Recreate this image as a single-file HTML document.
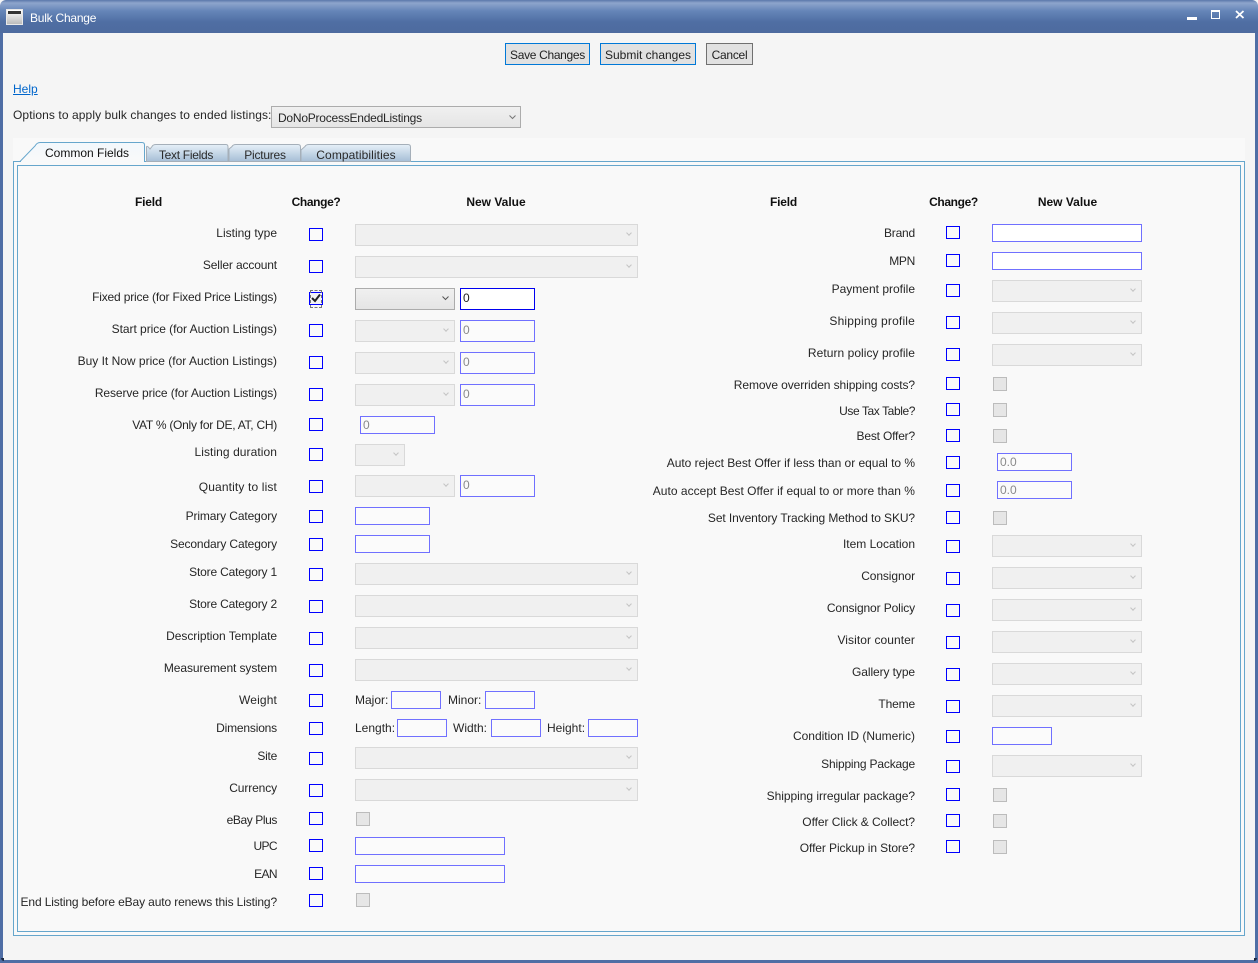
<!DOCTYPE html>
<html><head><meta charset="utf-8"><title>Bulk Change</title>
<style>
html,body{margin:0;padding:0}
body{position:relative;width:1258px;height:963px;overflow:hidden;background:#f5f5f5;font:12px/16px "Liberation Sans",sans-serif;color:#262626}
#p div,#p a,#p svg{position:absolute;box-sizing:border-box}
.t{white-space:nowrap;height:16px}
.l{right:981px;white-space:nowrap;height:16px}
.r{right:343px;white-space:nowrap;height:16px}
.h{font-weight:bold;color:#111;text-align:center;width:120px;height:16px}
.c{width:14px;height:13px;border:1px solid #0000ff;background:#fafafa}
.c1{left:309px}.c2{left:946px}
.b{width:14px;height:14px;border:1px solid #bcbcbc;background:#e6e6e6}
.s{height:22px;border:1px solid #d9d9d9;background:#f0f0f0}
.s::after{content:"";position:absolute;right:6px;top:6px;width:3px;height:3px;border-right:1px solid #c4c4c4;border-bottom:1px solid #c4c4c4;transform:rotate(45deg)}
.i{height:18px;border:1px solid #7070ff;background:#fbfbfb;color:#8a8a8a;padding-left:2px;line-height:17px}
.n{height:22px;line-height:19px}
.w{background:#fff}
.btn{top:43px;height:22px;background:#e1e1e1;border:1px solid #0078d7;text-align:center;line-height:22px;color:#222}
.tab{text-align:center;height:16px;color:#2a2a2a}
</style></head>
<body><div id="p">
<!-- window frame -->
<div style="left:0;top:0;width:1258px;height:33px;background:linear-gradient(#5a78ab 0,#8ea5cc 3px,#6585b8 11px,#4f6ea3 22px,#4e6b9f 33px);border-radius:6px 6px 0 0"></div>
<div style="left:0;top:33px;width:3px;height:930px;background:#4f6ea5"></div>
<div style="left:1255px;top:33px;width:3px;height:930px;background:#4f6ea5"></div>
<div style="left:0;top:960px;width:1258px;height:3px;background:#4f6ea5"></div>
<div style="left:1px;top:958px;width:3px;height:3px;background:#1c2a44;border-radius:0 0 0 3px"></div>
<div style="left:1254px;top:958px;width:3px;height:3px;background:#1c2a44;border-radius:0 0 3px 0"></div>
<!-- title icon -->
<div style="left:6px;top:9px;width:17px;height:16px;background:linear-gradient(#fff,#bbb);border:1px solid #e8e8e8"></div>
<div style="left:8px;top:11px;width:13px;height:3px;background:#333"></div>
<div class="t" style="left:30px;top:10px;color:#fff;letter-spacing:-.23px">Bulk Change</div>
<!-- window buttons -->
<div style="left:1187px;top:17px;width:10px;height:3px;background:#fff"></div>
<div style="left:1211px;top:10px;width:9px;height:9px;border:1px solid #fff;border-top:2px solid #fff"></div>
<svg style="left:1235px;top:10px" width="10" height="9" viewBox="0 0 10 9"><path d="M1 1L8.500 8M8.500 1L1 8" stroke="#fff" stroke-width="1.800" fill="none"/></svg>
<!-- buttons -->
<div class="btn" style="left:505px;width:85px;letter-spacing:-.32px">Save Changes</div>
<div class="btn" style="left:600px;width:96px">Submit changes</div>
<div class="btn" style="left:706px;width:47px;border-color:#707070;letter-spacing:-.28px">Cancel</div>
<a class="t" style="left:13px;top:81px;color:#0066cc;text-decoration:underline">Help</a>
<div class="t" style="left:13px;top:107px;letter-spacing:.09px">Options to apply bulk changes to ended listings:</div>
<div style="left:271px;top:106px;width:250px;height:22px;border:1px solid #acacac;background:linear-gradient(#f0f0f0,#e5e5e5);padding:3px 0 0 6px;letter-spacing:-.23px"><span>DoNoProcessEndedListings</span></div>
<svg style="left:508px;top:114px" width="9" height="6" viewBox="0 0 9 6"><path d="M1.500 1.500L4.500 4.500L7.500 1.500" stroke="#777" stroke-width="1" fill="none"/></svg>
<!-- tab panel -->
<div style="left:13px;top:138px;width:1232px;height:24px;background:#f9f9f9"></div>
<div style="left:13px;top:161px;width:1232px;height:775px;border:1px solid #66a6cc;background:#f9f9f9"></div>
<div style="left:17px;top:165px;width:1224px;height:767px;border:1px solid #66a6cc;background:#f9f9f9"></div>
<svg style="left:13px;top:138px" width="420" height="26" viewBox="13 138 420 26">
<defs><linearGradient id="g" x1="0" y1="0" x2="0" y2="1"><stop offset="0" stop-color="#e6f0f8"/><stop offset="1" stop-color="#a6bed6"/></linearGradient>
<linearGradient id="a" x1="0" y1="0" x2="0" y2="1"><stop offset="0" stop-color="#f2f8fc"/><stop offset="1" stop-color="#f9f9f9"/></linearGradient></defs>
<path d="M146.500 161.500V147Q147 145 150 149L152 146.500Q153 144.500 156 144.500H226Q228 144.500 228 147V161.500Z" fill="url(#g)" stroke="#a5afb9"/>
<path d="M229 161.500V149L232 146.500Q233 144.500 236 144.500H298Q300.500 144.500 300.500 147V161.500Z" fill="url(#g)" stroke="#a5afb9"/>
<path d="M301 161.500V150L305 146.500Q306 144.500 309 144.500H408Q410.500 144.500 410.500 147V161.500Z" fill="url(#g)" stroke="#a5afb9"/>
<path d="M20 161.500L35 146Q37 142.500 40 142.500H142Q144.500 142.500 144.500 145V161.500Z" fill="url(#a)" stroke="#66a6cc"/>
<path d="M21 161.500H144" stroke="#f6f9fb" stroke-width="1"/>
</svg>
<div class="tab" style="left:37px;top:145px;width:100px;color:#111">Common Fields</div>
<div class="tab" style="left:146px;top:147px;width:80px;letter-spacing:-.28px">Text Fields</div>
<div class="tab" style="left:230px;top:147px;width:70px;letter-spacing:-.23px">Pictures</div>
<div class="tab" style="left:306px;top:147px;width:100px;letter-spacing:.09px">Compatibilities</div>
<!-- headers -->
<div class="h" style="left:88.500px;top:194px;letter-spacing:-.18px">Field</div>
<div class="h" style="left:256px;top:194px;letter-spacing:-.37px">Change?</div>
<div class="h" style="left:436px;top:194px">New Value</div>
<div class="h" style="left:723.500px;top:194px;letter-spacing:-.18px">Field</div>
<div class="h" style="left:893.500px;top:194px;letter-spacing:-.37px">Change?</div>
<div class="h" style="left:1007.500px;top:194px">New Value</div>
<!-- left labels -->
<div class="l" style="top:225px">Listing type</div>
<div class="l" style="top:257px;letter-spacing:-.14px">Seller account</div>
<div class="l" style="top:289px;letter-spacing:-.17px">Fixed price (for Fixed Price Listings)</div>
<div class="l" style="top:321px;letter-spacing:-.04px">Start price (for Auction Listings)</div>
<div class="l" style="top:353px">Buy It Now price (for Auction Listings)</div>
<div class="l" style="top:385px;letter-spacing:-.11px">Reserve price (for Auction Listings)</div>
<div class="l" style="top:417px;letter-spacing:-.26px">VAT % (Only for DE, AT, CH)</div>
<div class="l" style="top:444px;letter-spacing:.07px">Listing duration</div>
<div class="l" style="top:479px;letter-spacing:.14px">Quantity to list</div>
<div class="l" style="top:508px;letter-spacing:-.12px">Primary Category</div>
<div class="l" style="top:536px;letter-spacing:-.14px">Secondary Category</div>
<div class="l" style="top:564px;letter-spacing:-.18px">Store Category 1</div>
<div class="l" style="top:596px;letter-spacing:-.18px">Store Category 2</div>
<div class="l" style="top:628px;letter-spacing:-.05px">Description Template</div>
<div class="l" style="top:660px;letter-spacing:-.09px">Measurement system</div>
<div class="l" style="top:692px;letter-spacing:.14px">Weight</div>
<div class="l" style="top:720px;letter-spacing:-.18px">Dimensions</div>
<div class="l" style="top:748px;letter-spacing:-.25px">Site</div>
<div class="l" style="top:780px;letter-spacing:-.12px">Currency</div>
<div class="l" style="top:812px;letter-spacing:-.41px">eBay Plus</div>
<div class="l" style="top:838px;letter-spacing:-.6px">UPC</div>
<div class="l" style="top:866px;letter-spacing:-.6px">EAN</div>
<div class="l" style="top:894px;letter-spacing:-.13px">End Listing before eBay auto renews this Listing?</div>
<!-- left checkboxes -->
<div class="c c1" style="top:228px"></div>
<div class="c c1" style="top:260px"></div>
<div class="c c1" style="top:292px;background:#f4f4f4"></div>
<div style="left:310px;top:290px;width:12px;height:18px;border:1px dashed #777"></div>
<svg style="left:309px;top:291px" width="14" height="14" viewBox="0 0 14 14"><path d="M3 7L6 10L11 3.500" stroke="#222" stroke-width="2" fill="none"/></svg>
<div class="c c1" style="top:324px"></div>
<div class="c c1" style="top:356px"></div>
<div class="c c1" style="top:388px"></div>
<div class="c c1" style="top:418px"></div>
<div class="c c1" style="top:448px"></div>
<div class="c c1" style="top:480px"></div>
<div class="c c1" style="top:510px"></div>
<div class="c c1" style="top:538px"></div>
<div class="c c1" style="top:568px"></div>
<div class="c c1" style="top:600px"></div>
<div class="c c1" style="top:632px"></div>
<div class="c c1" style="top:664px"></div>
<div class="c c1" style="top:694px"></div>
<div class="c c1" style="top:722px"></div>
<div class="c c1" style="top:752px"></div>
<div class="c c1" style="top:784px"></div>
<div class="c c1" style="top:812px"></div>
<div class="c c1" style="top:839px"></div>
<div class="c c1" style="top:867px"></div>
<div class="c c1" style="top:894px"></div>
<!-- left controls -->
<div class="s" style="left:355px;top:224px;width:283px"></div>
<div class="s" style="left:355px;top:256px;width:283px"></div>
<div style="left:355px;top:288px;width:100px;height:22px;border:1px solid #acacac;background:linear-gradient(#f0f0f0,#e5e5e5)"></div>
<svg style="left:441px;top:295px" width="9" height="6" viewBox="0 0 9 6"><path d="M1.500 1.500L4.500 4.500L7.500 1.500" stroke="#555" stroke-width="1" fill="none"/></svg>
<div class="i n w" style="left:460px;top:288px;width:75px;border-color:#0000f0;color:#222">0</div>
<div class="s" style="left:355px;top:320px;width:100px"></div>
<div class="i n" style="left:460px;top:320px;width:75px">0</div>
<div class="s" style="left:355px;top:352px;width:100px"></div>
<div class="i n" style="left:460px;top:352px;width:75px">0</div>
<div class="s" style="left:355px;top:384px;width:100px"></div>
<div class="i n" style="left:460px;top:384px;width:75px">0</div>
<div class="i" style="left:360px;top:416px;width:75px">0</div>
<div class="s" style="left:355px;top:444px;width:50px"></div>
<div class="s" style="left:355px;top:475px;width:100px"></div>
<div class="i n" style="left:460px;top:475px;width:75px">0</div>
<div class="i" style="left:355px;top:507px;width:75px"></div>
<div class="i" style="left:355px;top:535px;width:75px"></div>
<div class="s" style="left:355px;top:563px;width:283px"></div>
<div class="s" style="left:355px;top:595px;width:283px"></div>
<div class="s" style="left:355px;top:627px;width:283px"></div>
<div class="s" style="left:355px;top:659px;width:283px"></div>
<div class="t" style="left:355px;top:692px">Major:</div>
<div class="i" style="left:391px;top:691px;width:50px"></div>
<div class="t" style="left:448px;top:692px">Minor:</div>
<div class="i" style="left:485px;top:691px;width:50px"></div>
<div class="t" style="left:355px;top:720px">Length:</div>
<div class="i" style="left:397px;top:719px;width:50px"></div>
<div class="t" style="left:453px;top:720px">Width:</div>
<div class="i" style="left:491px;top:719px;width:50px"></div>
<div class="t" style="left:547px;top:720px">Height:</div>
<div class="i" style="left:588px;top:719px;width:50px"></div>
<div class="s" style="left:355px;top:747px;width:283px"></div>
<div class="s" style="left:355px;top:779px;width:283px"></div>
<div class="b" style="left:356px;top:812px"></div>
<div class="i" style="left:355px;top:837px;width:150px"></div>
<div class="i" style="left:355px;top:865px;width:150px"></div>
<div class="b" style="left:356px;top:893px"></div>
<!-- right labels -->
<div class="r" style="top:225px;letter-spacing:-.2px">Brand</div>
<div class="r" style="top:253px;letter-spacing:-.3px">MPN</div>
<div class="r" style="top:281px">Payment profile</div>
<div class="r" style="top:313px;letter-spacing:.18px">Shipping profile</div>
<div class="r" style="top:345px;letter-spacing:.05px">Return policy profile</div>
<div class="r" style="top:377px;letter-spacing:-.09px">Remove overriden shipping costs?</div>
<div class="r" style="top:403px;letter-spacing:-.41px">Use Tax Table?</div>
<div class="r" style="top:428px;letter-spacing:-.18px">Best Offer?</div>
<div class="r" style="top:455px;letter-spacing:-.02px">Auto reject Best Offer if less than or equal to %</div>
<div class="r" style="top:483px;letter-spacing:.02px">Auto accept Best Offer if equal to or more than %</div>
<div class="r" style="top:510px;letter-spacing:-.1px">Set Inventory Tracking Method to SKU?</div>
<div class="r" style="top:536px">Item Location</div>
<div class="r" style="top:568px;letter-spacing:-.1px">Consignor</div>
<div class="r" style="top:600px;letter-spacing:-.12px">Consignor Policy</div>
<div class="r" style="top:632px;letter-spacing:.07px">Visitor counter</div>
<div class="r" style="top:664px;letter-spacing:-.09px">Gallery type</div>
<div class="r" style="top:696px;letter-spacing:-.15px">Theme</div>
<div class="r" style="top:728px">Condition ID (Numeric)</div>
<div class="r" style="top:756px;letter-spacing:-.18px">Shipping Package</div>
<div class="r" style="top:788px;letter-spacing:-.04px">Shipping irregular package?</div>
<div class="r" style="top:814px;letter-spacing:-.05px">Offer Click &amp; Collect?</div>
<div class="r" style="top:840px;letter-spacing:-.09px">Offer Pickup in Store?</div>
<!-- right checkboxes -->
<div class="c c2" style="top:226px"></div>
<div class="c c2" style="top:254px"></div>
<div class="c c2" style="top:284px"></div>
<div class="c c2" style="top:316px"></div>
<div class="c c2" style="top:348px"></div>
<div class="c c2" style="top:377px"></div>
<div class="c c2" style="top:403px"></div>
<div class="c c2" style="top:429px"></div>
<div class="c c2" style="top:456px"></div>
<div class="c c2" style="top:484px"></div>
<div class="c c2" style="top:511px"></div>
<div class="c c2" style="top:540px"></div>
<div class="c c2" style="top:572px"></div>
<div class="c c2" style="top:604px"></div>
<div class="c c2" style="top:636px"></div>
<div class="c c2" style="top:668px"></div>
<div class="c c2" style="top:700px"></div>
<div class="c c2" style="top:730px"></div>
<div class="c c2" style="top:760px"></div>
<div class="c c2" style="top:788px"></div>
<div class="c c2" style="top:814px"></div>
<div class="c c2" style="top:840px"></div>
<!-- right controls -->
<div class="i w" style="left:992px;top:224px;width:150px"></div>
<div class="i w" style="left:992px;top:252px;width:150px"></div>
<div class="s" style="left:992px;top:280px;width:150px"></div>
<div class="s" style="left:992px;top:312px;width:150px"></div>
<div class="s" style="left:992px;top:344px;width:150px"></div>
<div class="b" style="left:993px;top:377px"></div>
<div class="b" style="left:993px;top:403px"></div>
<div class="b" style="left:993px;top:429px"></div>
<div class="i" style="left:997px;top:453px;width:75px">0.0</div>
<div class="i" style="left:997px;top:481px;width:75px">0.0</div>
<div class="b" style="left:993px;top:511px"></div>
<div class="s" style="left:992px;top:535px;width:150px"></div>
<div class="s" style="left:992px;top:567px;width:150px"></div>
<div class="s" style="left:992px;top:599px;width:150px"></div>
<div class="s" style="left:992px;top:631px;width:150px"></div>
<div class="s" style="left:992px;top:663px;width:150px"></div>
<div class="s" style="left:992px;top:695px;width:150px"></div>
<div class="i" style="left:992px;top:727px;width:60px"></div>
<div class="s" style="left:992px;top:755px;width:150px"></div>
<div class="b" style="left:993px;top:788px"></div>
<div class="b" style="left:993px;top:814px"></div>
<div class="b" style="left:993px;top:840px"></div>
</div></body></html>
